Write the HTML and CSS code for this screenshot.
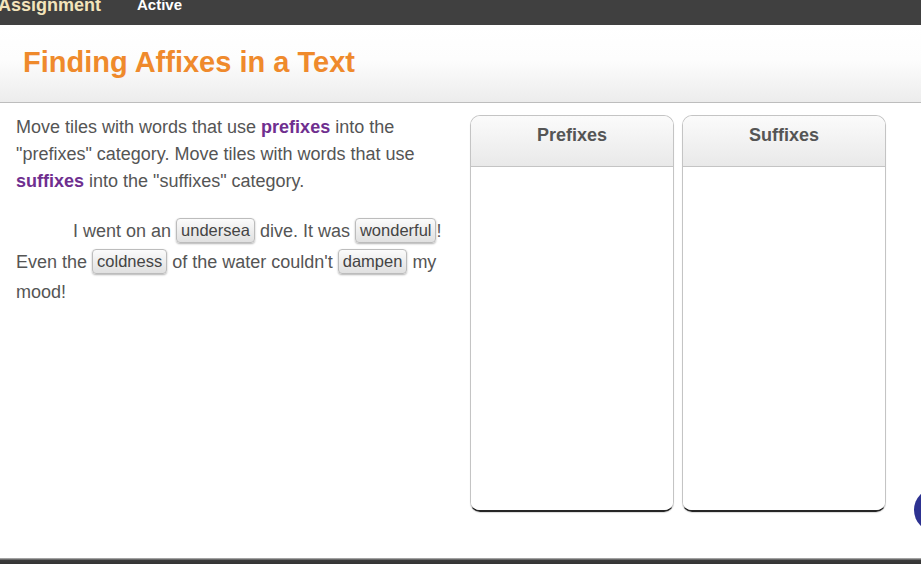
FILE: index.html
```html
<!DOCTYPE html>
<html>
<head>
<meta charset="utf-8">
<link rel="stylesheet" href="styles.css">
</head>
<body>
<div class="page">
  <div class="topbar">
    <span class="brand">Assignment</span>
    <span class="status">Active</span>
  </div>
  <div class="header">
    <h1 class="title">Finding Affixes in a Text</h1>
  </div>
  <div class="main">
    <div class="left">
      <p class="instructions">Move tiles with words that use <b class="hl">prefixes</b> into the "prefixes" category. Move tiles with words that use <b class="hl">suffixes</b> into the "suffixes" category.</p>
      <p class="story">I went on an <span class="tile">undersea</span> dive. It was <span class="tile">wonderful</span>! Even the <span class="tile">coldness</span> of the water couldn't <span class="tile">dampen</span> my mood!</p>
    </div>
    <div class="bins">
      <div class="bin">
        <div class="bin-head">Prefixes</div>
        <div class="bin-body"></div>
      </div>
      <div class="bin">
        <div class="bin-head">Suffixes</div>
        <div class="bin-body"></div>
      </div>
    </div>
  </div>
  <div class="footer"></div>
  <div class="fab"></div>
</div>
</body>
</html>
```
FILE: styles.css
```css
html, body {
  margin: 0;
  padding: 0;
}
body {
  font-family: "Liberation Sans", Arial, sans-serif;
  background: #fff;
  overflow: hidden;
}
.page {
  position: relative;
  height: 564px;
  width: 921px;
  display: flex;
  flex-direction: column;
  overflow: hidden;
}
.topbar {
  height: 25px;
  background: #404040;
  display: flex;
  align-items: flex-start;
  flex: none;
  overflow: hidden;
}
.brand {
  margin-left: -2px;
  margin-top: -6px;
  line-height: 22px;
  color: #f3e4bb;
  font-weight: bold;
  font-size: 18px;
}
.status {
  margin-left: 36px;
  margin-top: -4px;
  line-height: 18px;
  color: #fff;
  font-weight: bold;
  font-size: 15px;
}
.header {
  height: 78px;
  flex: none;
  background: linear-gradient(#ffffff 0%, #fdfdfd 45%, #ececec 100%);
  border-bottom: 1px solid #bdbdbd;
  display: flex;
  align-items: center;
  padding-left: 23px;
  box-sizing: border-box;
}
.title {
  margin: 0 0 2px 0;
  color: #ef8a2c;
  font-size: 29px;
  font-weight: bold;
}
.main {
  flex: 1;
  display: flex;
  padding: 11px 0 0 16px;
}
.left {
  width: 438px;
  flex: none;
}
.instructions {
  margin: 0;
  font-size: 18px;
  line-height: 27px;
  color: #555;
}
.hl {
  color: #6f2f8f;
}
.story {
  margin: 21px 0 0 0;
  font-size: 18px;
  line-height: 30.5px;
  color: #555;
  text-indent: 57px;
}
.tile {
  display: inline-block;
  text-indent: 0;
  font-size: 16.5px;
  line-height: 23px;
  padding: 0 4px 0 4px;
  color: #444;
  border: 1px solid #bcbcbc;
  border-radius: 4px;
  background: linear-gradient(#fbfbfb, #e0e0e0);
  box-shadow: 0 1px 2px rgba(0, 0, 0, 0.3);
  vertical-align: 1px;
}
.bins {
  display: flex;
  gap: 8px;
  margin-left: 16px;
  margin-top: 1px;
}
.bin {
  width: 204px;
  height: 397px;
  box-sizing: border-box;
  border: 1px solid #c4c4c4;
  border-bottom: 2px solid #262626;
  border-radius: 10px;
  display: flex;
  flex-direction: column;
  overflow: hidden;
  box-shadow: 0 1px 1px rgba(0,0,0,0.15);
}
.bin-head {
  height: 51px;
  flex: none;
  box-sizing: border-box;
  border-bottom: 1px solid #c4c4c4;
  background: linear-gradient(#fbfbfb, #e9e9e9);
  text-align: center;
  font-size: 18px;
  font-weight: bold;
  color: #555;
  padding-top: 9px;
}
.bin-body {
  flex: 1;
  background: #fff;
}
.footer {
  height: 6px;
  flex: none;
  background: linear-gradient(#bdbdbd, #3a3a3a 40%, #333);
}
.fab {
  position: absolute;
  left: 914px;
  top: 488px;
  width: 44px;
  height: 44px;
  border-radius: 50%;
  background: #2d3291;
}
```
